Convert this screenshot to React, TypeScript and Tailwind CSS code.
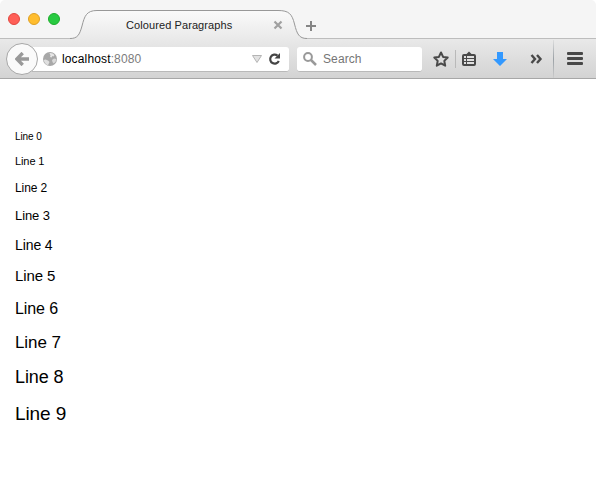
import React from "react";

const lines = [
  "text-[10px] mt-0",
  "text-[11px] mt-[4px]",
  "text-[12px] mt-[7px]",
  "text-[13px] mt-[8px]",
  "text-[14px] mt-[9px]",
  "text-[15px] mt-[11px]",
  "text-[16px] mt-[13px]",
  "text-[17px] mt-[14px]",
  "text-[18px] mt-[14px]",
  "text-[19px] mt-[17px]",
];

function TabShape() {
  return (
    <svg className="absolute left-0 top-0" width="238" height="30" viewBox="0 0 238 30">
      <defs>
        <linearGradient id="tab" x1="0" y1="0" x2="0" y2="1">
          <stop offset="0" stopColor="#fafafa" />
          <stop offset="1" stopColor="#e9e9e9" />
        </linearGradient>
      </defs>
      <path
        d="M0 28.5C7.500 28.500 9.500 25 12 16C14.500 6 16.500 0.500 27 0.500H208C219 0.500 222 4 224.500 14C227 24 229 28.500 237 28.500V30H0Z"
        fill="url(#tab)"
      />
      <path
        d="M0 28.500C7.500 28.500 9.500 25 12 16C14.500 6 16.500 0.500 27 0.500H208C219 0.500 222 4 224.500 14C227 24 229 28.500 237 28.500"
        fill="none"
        stroke="#989898"
      />
    </svg>
  );
}

function TabStrip() {
  return (
    <header className="flex h-[39px] rounded-t-[5px] border-b border-[#bdbdbd] bg-[#f5f5f5]">
      <div className="flex w-[70px] shrink-0 gap-2 pl-2 pt-[13px]">
        <span className="size-3 rounded-full border border-[#e2463f] bg-[#ff5f57]" />
        <span className="size-3 rounded-full border border-[#dfa023] bg-[#ffbd2e]" />
        <span className="size-3 rounded-full border border-[#1dad2b] bg-[#28ca41]" />
      </div>
      <div className="relative mt-[10px] h-[29px] w-[234px] shrink-0">
        <TabShape />
        <div className="relative flex h-[30px] items-center pl-[56px] text-[11px] text-[#222]">
          <span className="w-[147px] whitespace-nowrap tracking-[0.09px]">Coloured Paragraphs</span>
          <svg width="10" height="10" viewBox="0 0 10 10">
            <path d="M1.500 1.500L8.500 8.500M8.500 1.500L1.500 8.500" stroke="#a0a0a0" strokeWidth="2.200" />
          </svg>
        </div>
      </div>
      <svg className="ml-[1px] mt-5 shrink-0" width="12" height="12" viewBox="0 0 12 12">
        <path d="M6 1V11M1 6H11" stroke="#858585" strokeWidth="2" />
      </svg>
    </header>
  );
}

function Globe() {
  return (
    <svg className="shrink-0" width="14" height="14" viewBox="0 0 14 14">
      <circle cx="7" cy="7" r="7" fill="#a8a8a8" />
      <path d="M6.500 1Q10 0.800 11.500 3L10.500 4.500L9.500 4L8.500 5.500L7 5L7.500 3.500Z" fill="#e6e6e6" />
      <path d="M0.700 8L2.500 7.500L5 8.500L6.500 10L5 13.200Q1.500 12 0.700 8Z" fill="#e0e0e0" />
      <path d="M9 8L11 6.500L13.300 7L12.500 10L10.500 11.500L9.500 10Z" fill="#d9d9d9" />
    </svg>
  );
}

function NavBar() {
  return (
    <nav className="flex h-10 items-center border-b border-[#a7a7a7] bg-gradient-to-b from-[#e9e9e9] to-[#d3d3d3] pl-[6px]">
      <div className="z-10 flex size-8 shrink-0 items-center justify-center rounded-full border border-[#a7a7a7] bg-[#fafafa]">
        <svg width="14" height="14" viewBox="0 0 14 14">
          <path d="M7.700 1L1.800 7L7.700 13M2 7H14" fill="none" stroke="#999" strokeWidth="3.400" />
        </svg>
      </div>
      <div className="-ml-[6px] mt-[2px] flex h-[25px] w-[257px] shrink-0 items-center rounded-r-[3px] border-b border-[#b9b9b9] bg-white pl-[11px] text-[12px]">
        <Globe />
        <div className="ml-[5px] w-[189px] tracking-[0.14px] text-[#7c7c7c]">
          <span className="text-black">localhost</span>:8080
        </div>
        <svg width="12" height="10" viewBox="0 0 12 10">
          <path d="M1.500 1.500H10.500L6 8.500Z" fill="#e2e2e2" stroke="#b4b4b4" />
        </svg>
        <svg className="ml-[5px]" width="14" height="14" viewBox="0 0 14 14">
          <path d="M9.500 3.600A4.500 4.500 0 1 0 10.800 9" fill="none" stroke="#454545" strokeWidth="2.200" />
          <path d="M12 1V6.500H6.500Z" fill="#454545" />
        </svg>
      </div>
      <div className="ml-2 mt-[2px] flex h-[25px] w-[125px] shrink-0 items-center rounded-[3px] border-b border-[#b9b9b9] bg-white pl-[6px] text-[12px] text-[#757575]">
        <svg width="14" height="14" viewBox="0 0 14 14">
          <circle cx="5" cy="5" r="3.900" fill="none" stroke="#999" strokeWidth="2" />
          <path d="M8 8L13 13" stroke="#999" strokeWidth="2.500" />
        </svg>
        <span className="ml-[6px] tracking-[0.1px]">Search</span>
      </div>
      <svg className="ml-[10px] shrink-0" width="18" height="18" viewBox="0 0 18 18">
        <path d="M9 2.500L11.100 6.900L15.700 7.500L12.300 10.900L13.200 15.700L9 13.400L4.800 15.700L5.700 10.900L2.300 7.500L6.900 6.900Z" fill="none" stroke="#494949" strokeWidth="2" strokeLinejoin="round" />
      </svg>
      <span className="ml-[5px] h-[18px] w-px shrink-0 bg-[#b9b9b9]" />
      <svg className="ml-[5px] shrink-0" width="16" height="16" viewBox="0 0 16 16">
        <path d="M1 5Q1 3 3 3H5.500L8 0.500L10.500 3H13Q15 3 15 5V13Q15 15 13 15H3Q1 15 1 13Z" fill="#494949" />
        <path d="M3 5H5V7H3ZM6 5H13V7H6ZM3 8H5V10H3ZM6 8H13V10H6ZM3 11H5V13H3ZM6 11H13V13H6Z" fill="#dfdfdf" />
      </svg>
      <svg className="ml-4 shrink-0" width="14" height="16" viewBox="0 0 14 16">
        <path d="M4 1H10V8H14L7 15L0 8H4Z" fill="#3399ff" />
      </svg>
      <svg className="ml-[23px] shrink-0" width="14" height="10" viewBox="0 0 14 10">
        <path d="M1.500 1L5 5L1.500 9M7 1L10.500 5L7 9" fill="none" stroke="#494949" strokeWidth="2.400" />
      </svg>
      <span className="ml-[9px] h-[38px] w-px shrink-0 bg-gradient-to-b from-[#ddd] via-[#9ba1a6] to-[#ccc]" />
      <span className="ml-[13px] flex w-4 shrink-0 flex-col gap-[2px]">
        <span className="h-[3px] rounded-[1px] bg-[#484848]" />
        <span className="h-[3px] rounded-[1px] bg-[#484848]" />
        <span className="h-[3px] rounded-[1px] bg-[#484848]" />
      </span>
    </nav>
  );
}

export default function App() {
  return (
    <div className="h-[492px] w-[596px] overflow-hidden bg-white font-['Liberation_Sans',Arial,sans-serif]">
      <TabStrip />
      <NavBar />
      <main className="flex flex-col pl-[15px] pt-[48px] leading-5 tracking-[-0.1px] text-black">
        {lines.map((style, index) => (
          <p key={index} className={`${style} h-5 leading-5`}>Line {index}</p>
        ))}
      </main>
    </div>
  );
}
